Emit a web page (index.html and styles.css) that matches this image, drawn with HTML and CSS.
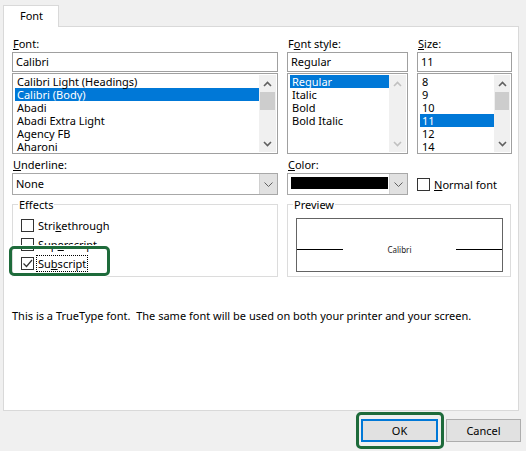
FILE: index.html
```html
<!DOCTYPE html>
<html>
<head>
<meta charset="utf-8">
<title>Font</title>
<link rel="stylesheet" href="styles.css">
</head>
<body>
<div class="dialog">
  <div class="tabs"><div class="tab">Font</div></div>
  <div class="panel">
    <div class="grid">
      <div class="col">
        <div class="label"><u>F</u>ont:</div>
        <div class="input">Calibri</div>
        <div class="list">
          <div class="items">
            <div class="item">Calibri Light (Headings)</div>
            <div class="item sel">Calibri (Body)</div>
            <div class="item">Abadi</div>
            <div class="item">Abadi Extra Light</div>
            <div class="item">Agency FB</div>
            <div class="item">Aharoni</div>
          </div>
          <div class="sb">
            <div class="arrow"><svg width="9" height="6" viewBox="0 0 9 6"><polyline points="1,5 4.5,1.5 8,5" class="chev"/></svg></div>
            <div class="track"><div class="thumb"></div></div>
            <div class="arrow"><svg width="9" height="6" viewBox="0 0 9 6"><polyline points="1,1 4.5,4.5 8,1" class="chev"/></svg></div>
          </div>
        </div>
      </div>
      <div class="col">
        <div class="label">F<u>o</u>nt style:</div>
        <div class="input">Regular</div>
        <div class="list">
          <div class="items">
            <div class="item sel">Regular</div>
            <div class="item">Italic</div>
            <div class="item">Bold</div>
            <div class="item">Bold Italic</div>
          </div>
          <div class="sb disabled">
            <div class="arrow"><svg width="9" height="6" viewBox="0 0 9 6"><polyline points="1,5 4.5,1.5 8,5" class="chev"/></svg></div>
            <div class="track"></div>
            <div class="arrow"><svg width="9" height="6" viewBox="0 0 9 6"><polyline points="1,1 4.5,4.5 8,1" class="chev"/></svg></div>
          </div>
        </div>
      </div>
      <div class="col">
        <div class="label"><u>S</u>ize:</div>
        <div class="input">11</div>
        <div class="list">
          <div class="items">
            <div class="item">8</div>
            <div class="item">9</div>
            <div class="item">10</div>
            <div class="item sel">11</div>
            <div class="item">12</div>
            <div class="item">14</div>
          </div>
          <div class="sb small">
            <div class="arrow"><svg width="9" height="6" viewBox="0 0 9 6"><polyline points="1,5 4.5,1.5 8,5" class="chev"/></svg></div>
            <div class="track"><div class="thumb"></div></div>
            <div class="arrow"><svg width="9" height="6" viewBox="0 0 9 6"><polyline points="1,1 4.5,4.5 8,1" class="chev"/></svg></div>
          </div>
        </div>
      </div>
    </div>

    <div class="grid row2">
      <div class="col">
        <div class="label"><u>U</u>nderline:</div>
        <div class="combo">
          <div class="value">None</div>
          <div class="drop"><svg width="9" height="5" viewBox="0 0 9 5"><polyline points="0.5,0.5 4.5,4.5 8.5,0.5" class="dchev"/></svg></div>
        </div>
      </div>
      <div class="col">
        <div class="label"><u>C</u>olor:</div>
        <div class="combo">
          <div class="value"><div class="swatch"></div></div>
          <div class="drop"><svg width="9" height="5" viewBox="0 0 9 5"><polyline points="0.5,0.5 4.5,4.5 8.5,0.5" class="dchev"/></svg></div>
        </div>
      </div>
      <div class="col">
        <div class="label">&nbsp;</div>
        <div class="checkrow normal"><span class="box"></span><span><u>N</u>ormal font</span></div>
      </div>
    </div>

    <div class="groups">
      <fieldset class="group effects">
        <legend>Effects</legend>
        <div class="checkrow"><span class="box"></span><span>Stri<u>k</u>ethrough</span></div>
        <div class="checkrow"><span class="box"></span><span>Sup<u>e</u>rscript</span></div>
        <div class="checkrow focus-row">
          <span class="box checked"><svg width="11" height="11" viewBox="0 0 11 11"><polyline points="1.5,5.5 4.5,8.5 10,2" class="tick"/></svg></span>
          <span class="focus">Su<u>b</u>script</span>
          <span class="mark mark-sub"></span>
        </div>
      </fieldset>
      <fieldset class="group preview">
        <legend>Preview</legend>
        <div class="pbox">
          <div class="pline"></div>
          <div class="sample">Calibri</div>
          <div class="pline"></div>
        </div>
      </fieldset>
    </div>

    <p class="note">This is a TrueType font.&nbsp; The same font will be used on both your printer and your screen.</p>
  </div>

  <div class="buttons">
    <button class="btn ok">OK<span class="mark mark-ok"></span></button>
    <button class="btn">Cancel</button>
  </div>
</div>
</body>
</html>
```

FILE: styles.css
```css
* { box-sizing: border-box; }

html, body {
  margin: 0;
  padding: 0;
  background: #f0f0f0;
}

body {
  width: 526px;
  height: 451px;
  overflow: hidden;
  font-family: "Noto Sans", "Liberation Sans", sans-serif;
  font-size: 11px;
  color: #000;
}

u { text-decoration: underline; text-underline-offset: 1px; }

.tabs {
  padding: 5px 0 0 3px;
  height: 27px;
}

.tab {
  position: relative;
  width: 56px;
  height: 22px;
  background: #fff;
  border: 1px solid #d9d9d9;
  border-bottom: none;
  text-align: center;
  line-height: 20px;
  padding-left: 1px;
}

.panel {
  margin: -1px 0 0 3px;
  width: 516px;
  height: 385px;
  background: #fff;
  border: 1px solid #d9d9d9;
  padding: 9px 5px 0 8px;
}

.grid {
  display: grid;
  grid-template-columns: 266px 121px 95px;
  column-gap: 9px;
}

.col {
  display: flex;
  flex-direction: column;
}

.label {
  height: 15px;
  line-height: 15px;
  padding-left: 1px;
  white-space: nowrap;
}

.input {
  margin-top: 1px;
  height: 20px;
  border: 1px solid #a0a0a0;
  line-height: 18px;
  padding-left: 3px;
}

.list {
  margin-top: 1px;
  height: 81px;
  border: 1px solid #a0a0a0;
  padding: 1px 1px 0 1px;
  display: flex;
}

.items {
  flex: 1;
  overflow: hidden;
  padding-left: 1px;
}

.item {
  height: 13px;
  line-height: 13px;
  padding-left: 2px;
  white-space: nowrap;
}

.item.sel {
  background: #0078d7;
  color: #fff;
}

.sb {
  width: 17px;
  margin-bottom: 1px;
  background: #f0f0f0;
  display: flex;
  flex-direction: column;
}

.sb.small { width: 16px; }

.arrow {
  height: 17px;
  display: flex;
  align-items: center;
  justify-content: center;
}

.chev {
  fill: none;
  stroke: #606060;
  stroke-width: 1.6;
}

.sb.disabled .chev { stroke: #c0c0c0; }

.track {
  flex: 1;
  padding: 0 1px;
}

.thumb {
  height: 18px;
  background: #cdcdcd;
}

.row2 {
  margin-top: 3px;
}

.combo {
  margin-top: 1px;
  height: 22px;
  border: 1px solid #a8a8a8;
  display: flex;
}

.combo .value {
  flex: 1;
  line-height: 20px;
  padding-left: 3px;
}

.combo .swatch {
  margin: 3px 0 0 0;
  width: 97px;
  height: 12px;
  background: #000;
}

.combo .drop {
  width: 18px;
  background: #e1e1e1;
  border-left: 1px solid #d0d0d0;
  display: flex;
  align-items: center;
  justify-content: center;
}

.dchev {
  fill: none;
  stroke: #606060;
  stroke-width: 1;
}

.checkrow {
  height: 19px;
  display: flex;
  align-items: center;
  gap: 4px;
  white-space: nowrap;
}

.checkrow.normal {
  margin-top: 1px;
  height: 22px;
}

.box {
  width: 13px;
  height: 13px;
  border: 1px solid #333;
  background: #fff;
  flex: none;
  display: flex;
  align-items: center;
  justify-content: center;
}

.tick {
  fill: none;
  stroke: #333;
  stroke-width: 1.2;
}

.groups {
  margin-top: 2px;
  display: grid;
  grid-template-columns: 266px 224px;
  column-gap: 9px;
}

.group {
  margin: 0;
  min-width: 0;
  border: 1px solid #dcdcdc;
  padding: 0 7px 3px 8px;
}

.group legend {
  padding: 0 1px;
  margin-left: -3px;
  line-height: 15px;
  height: 15px;
}

.effects .checkrow:first-of-type { margin-top: 4px; }

.focus-row { position: relative; }

.focus {
  outline: 1px dotted #000;
  outline-offset: 0;
  padding: 0 1px;
  margin-left: -1px;
  line-height: 15px;
}

.mark {
  position: absolute;
  border: 3px solid #1e6b3b;
  border-radius: 5px;
  pointer-events: none;
}

.mark-sub {
  left: -12px;
  top: -8px;
  width: 101px;
  height: 30px;
  box-shadow: 0 0 0 1px #fff;
}

.pbox {
  margin-top: 6px;
  height: 54px;
  border: 1px solid #646464;
  padding-top: 8px;
  display: flex;
  align-items: center;
}

.pline {
  flex: 0 0 46px;
  height: 1px;
  background: #000;
}

.sample {
  flex: 1;
  text-align: center;
  font-size: 8px;
  color: #1a1a1a;
}

.note {
  margin: 31px 0 0 0;
  line-height: 15px;
  white-space: nowrap;
}

.buttons {
  margin-top: 8px;
  display: flex;
  justify-content: flex-end;
  gap: 8px;
  padding-right: 5px;
}

.btn {
  position: relative;
  height: 23px;
  width: 75px;
  font: inherit;
  color: #000;
  background: #e1e1e1;
  border: 1px solid #adadad;
  padding: 0;
}

.btn.ok {
  width: 77px;
  border: 2px solid #0078d7;
}

.mark-ok {
  left: -7px;
  top: -9px;
  right: -8px;
  bottom: -9px;
}
```
